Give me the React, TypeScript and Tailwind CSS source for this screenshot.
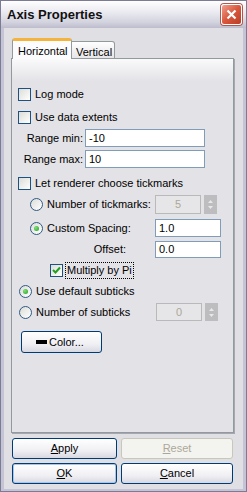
import React from 'react'

const font = { fontFamily: '"Liberation Sans", Arial, sans-serif' }

const CheckBox = ({ checked }: { checked?: boolean }) => (
  <div className="relative w-[13px] h-[13px] shrink-0 border border-[#1c5180] bg-[linear-gradient(135deg,#dcdcd7,#ffffff)]">
    {checked && (
      <svg width="11" height="11" viewBox="0 0 11 11" className="absolute left-0 top-0">
        <path d="M2 5 L4.5 7.5 L9 2.5" fill="none" stroke="#21a121" strokeWidth="2" />
      </svg>
    )}
  </div>
)

const Radio = ({ checked }: { checked?: boolean }) => (
  <div className="w-[13px] h-[13px] shrink-0 rounded-full border border-[#2f5a86] bg-[linear-gradient(135deg,#dcdcd7,#ffffff)] flex items-center justify-center">
    {checked && <div className="w-[5px] h-[5px] rounded-full bg-[radial-gradient(circle_at_35%_35%,#7fe07a,#21a121)]" />}
  </div>
)

const Input = ({ value, w, h = 18 }: { value: string; w: string; h?: number }) => (
  <div
    className={`${w} shrink-0 border border-[#7f9db9] bg-white pl-[3px] flex items-center text-black`}
    style={{ height: h }}
  >
    {value}
  </div>
)

const Spin = ({ value }: { value: string }) => (
  <>
    <div className="w-[46px] h-full shrink-0 border border-[#b9b9b9] bg-[#e6e6e8] flex items-center justify-center text-[#aca899]">
      {value}
    </div>
    <div className="ml-[3px] w-[13px] h-full shrink-0 bg-[#bdbdbf] flex flex-col items-center justify-center gap-[3px]">
      <svg width="5" height="3" viewBox="0 0 5 3">
        <path d="M2.5 0 L5 3 L0 3 Z" fill="#e8e8e8" />
      </svg>
      <svg width="5" height="3" viewBox="0 0 5 3">
        <path d="M0 0 L5 0 L2.5 3 Z" fill="#e8e8e8" />
      </svg>
    </div>
  </>
)

const Button = ({
  children,
  w,
  disabled,
  isDefault,
}: {
  children: React.ReactNode
  w: string
  disabled?: boolean
  isDefault?: boolean
}) => (
  <div
    className={`${w} h-[21px] shrink-0 rounded-[3px] border flex items-center justify-center ${
      disabled
        ? 'border-[#c9c7ba] bg-[#f3f3ef] text-[#aca899]'
        : 'border-[#003c74] bg-[linear-gradient(to_bottom,#ffffff,#f0f0f4_60%,#d8d8e2)] text-black'
    } ${isDefault ? 'shadow-[inset_0_0_0_1px_#aac4ec]' : ''}`}
  >
    {children}
  </div>
)

export default function App() {
  return (
    <div
      className="w-[247px] h-[492px] flex flex-col border border-[#7b7b94] bg-[#c4c4d6] text-[11px] leading-none text-black"
      style={font}
    >
      {/* title bar */}
      <div className="h-[27px] shrink-0 flex items-center pl-[6px] pr-[4px] bg-[linear-gradient(to_bottom,#ffffff,#e8e8ef_45%,#d2d2de_80%,#bcbccd)]">
        <span className="text-[13px] font-bold text-[#111]">Axis Properties</span>
        <div className="ml-auto w-[21px] h-[21px] rounded-[3px] border border-white bg-[linear-gradient(135deg,#f0a08e,#d8573d_50%,#b93d24)] flex items-center justify-center shadow-[0_0_0_1px_#b05a4c]">
          <svg width="11" height="11" viewBox="0 0 11 11">
            <path d="M1.5 1.5 L9.5 9.5 M9.5 1.5 L1.5 9.5" stroke="white" strokeWidth="2.2" />
          </svg>
        </div>
      </div>

      {/* body */}
      <div className="flex-1 mx-[3px] mb-[2px] bg-[#e0dfe3] pl-[7px] pr-[9px] pt-[10px] pb-[5px] flex flex-col">
        {/* tabs */}
        <div className="relative z-10 -mb-[1px] ml-[1px] flex items-end h-[21px]">
          <div className="w-[60px] h-[21px] border-x border-[#919b9c] bg-[#fcfcfe] border-t-[3px] border-t-[#f4b43c] rounded-t-[3px] pl-[5px] pt-[5px]">
            Horizontal
          </div>
          <div className="w-[43px] h-[18px] border-t border-r border-b border-[#919b9c] rounded-tr-[3px] bg-[linear-gradient(to_bottom,#ffffff,#e6e6ea)] pl-[4px] pt-[5px]">
            Vertical
          </div>
        </div>

        {/* panel */}
        <div className="h-[375px] shrink-0 border border-[#919b9c] shadow-[1px_1px_0_#a7a7b3] bg-[linear-gradient(to_bottom,#fafafb_0px,#e3e2e6_22px)] pt-[25px] pl-[6px] flex flex-col">
          <div className="h-[21px] flex items-center gap-[4px]">
            <CheckBox />
            <span>Log mode</span>
          </div>
          <div className="mt-[2px] h-[21px] flex items-center gap-[4px]">
            <CheckBox />
            <span>Use data extents</span>
          </div>
          <div className="mt-[1px] h-[18px] flex items-center">
            <span className="w-[65px] text-right">Range min:</span>
            <div className="ml-[2px]">
              <Input value="-10" w="w-[120px]" />
            </div>
          </div>
          <div className="mt-[3px] h-[18px] flex items-center">
            <span className="w-[65px] text-right">Range max:</span>
            <div className="ml-[2px]">
              <Input value="10" w="w-[120px]" />
            </div>
          </div>
          <div className="mt-[5px] h-[21px] flex items-center gap-[4px]">
            <CheckBox />
            <span>Let renderer choose tickmarks</span>
          </div>
          <div className="mt-[1px] h-[19px] ml-[12px] flex items-center">
            <div className="w-[125px] flex items-center gap-[4px]">
              <Radio />
              <span>Number of tickmarks:</span>
            </div>
            <Spin value="5" />
          </div>
          <div className="mt-[5px] h-[18px] ml-[12px] flex items-center">
            <div className="w-[125px] flex items-center gap-[4px]">
              <Radio checked />
              <span>Custom Spacing:</span>
            </div>
            <Input value="1.0" w="w-[66px]" />
          </div>
          <div className="mt-[4px] h-[17px] ml-[12px] flex items-center">
            <span className="w-[96px] text-right">Offset:</span>
            <div className="ml-[29px]">
              <Input value="0.0" w="w-[66px]" h={17} />
            </div>
          </div>
          <div className="mt-[3px] h-[19px] ml-[32px] flex items-center gap-[3px]">
            <CheckBox checked />
            <span className="outline outline-1 outline-dotted outline-black px-[1px] py-[2px]">Multiply by Pi</span>
          </div>
          <div className="mt-[2px] h-[19px] ml-[1px] flex items-center gap-[4px]">
            <Radio checked />
            <span>Use default subticks</span>
          </div>
          <div className="mt-[2px] h-[18px] ml-[1px] flex items-center">
            <div className="w-[137px] flex items-center gap-[4px]">
              <Radio />
              <span>Number of subticks</span>
            </div>
            <Spin value="0" />
          </div>
          <div className="mt-[10px] ml-[3px]">
            <div className="w-[81px] h-[22px] rounded-[3px] border border-[#003c74] bg-[linear-gradient(to_bottom,#ffffff,#f0f0f4_60%,#d8d8e2)] flex items-center pl-[14px] gap-[2px]">
              <div className="w-[11px] h-[4px] bg-black" />
              <span>Color...</span>
            </div>
          </div>
        </div>

        {/* buttons */}
        <div className="mt-[5px] ml-[1px] flex gap-[4px]">
          <Button w="w-[105px]">
            <span>
              <span className="underline">A</span>pply
            </span>
          </Button>
          <Button w="w-[112px]" disabled>
            <span>
              <span className="underline">R</span>eset
            </span>
          </Button>
        </div>
        <div className="mt-[4px] ml-[1px] flex gap-[4px]">
          <Button w="w-[105px]" isDefault>
            <span>
              <span className="underline">O</span>K
            </span>
          </Button>
          <Button w="w-[112px]">
            <span>
              <span className="underline">C</span>ancel
            </span>
          </Button>
        </div>
      </div>
    </div>
  )
}
